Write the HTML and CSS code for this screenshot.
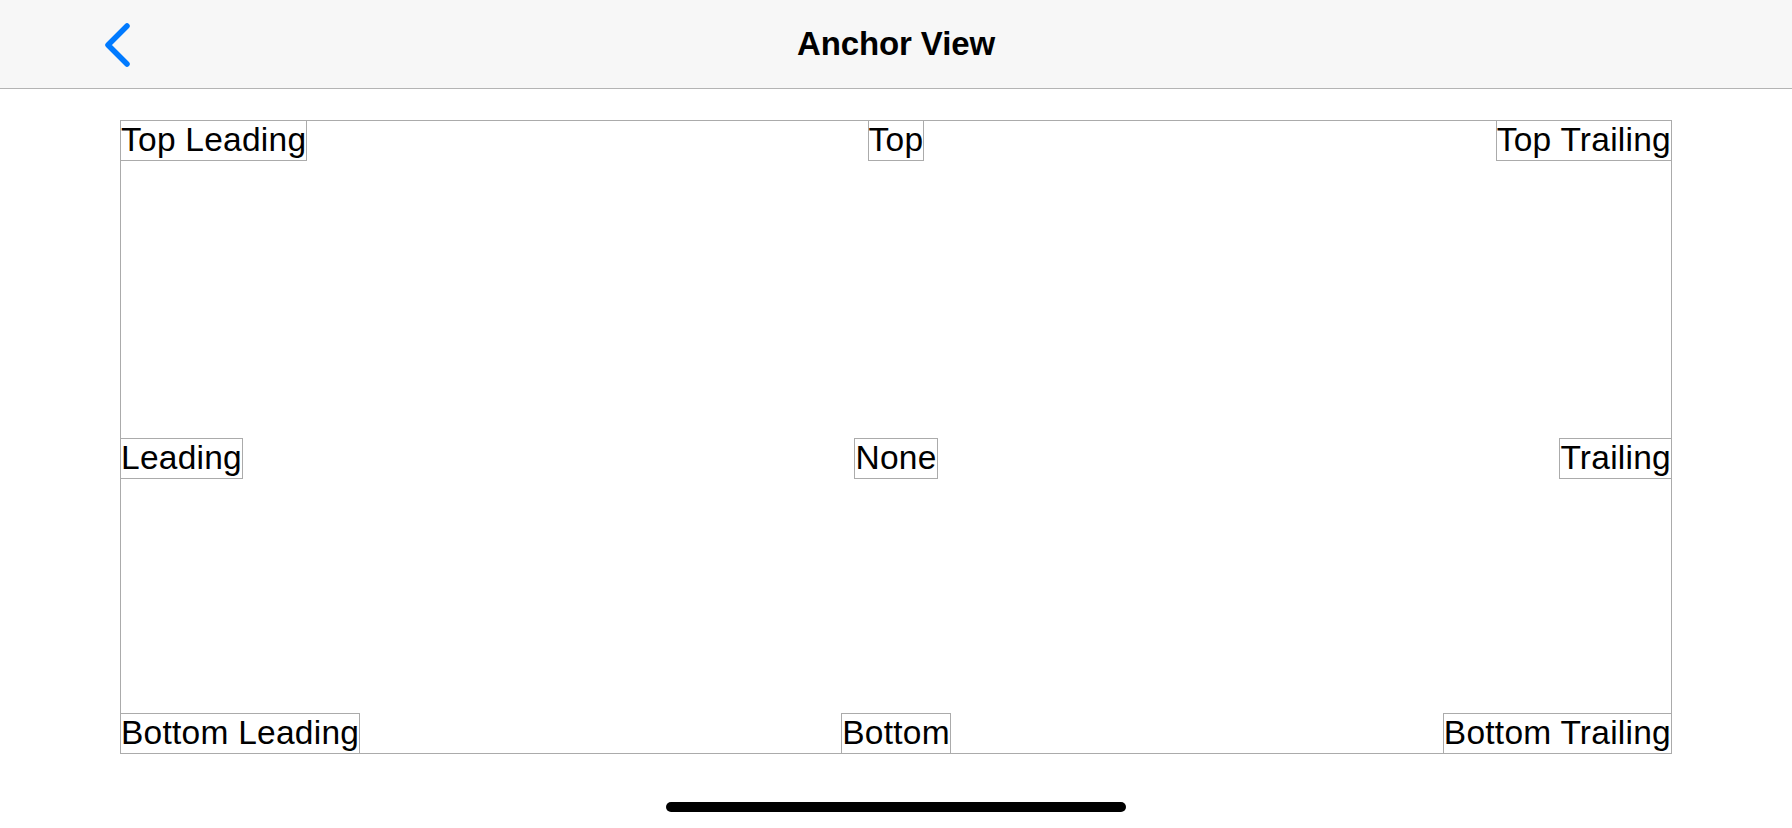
FILE: index.html
```html
<!DOCTYPE html>
<html lang="en">
<head>
<meta charset="utf-8">
<title>Anchor View</title>
<link rel="stylesheet" href="styles.css">
</head>
<body>
<div class="screen">
  <header class="navbar">
    <div class="nav-left">
      <svg class="back" width="28" height="46" viewBox="0 0 28 46" aria-hidden="true">
        <path d="M23 4 L4 23 L23 42" fill="none" stroke="#007aff" stroke-width="5.5" stroke-linecap="round" stroke-linejoin="round"/>
      </svg>
    </div>
    <div class="nav-title">Anchor View</div>
    <div class="nav-right"></div>
  </header>
  <main class="content">
    <div class="frame">
      <div class="label r1 start">Top Leading</div>
      <div class="label r1 mid">Top</div>
      <div class="label r1 end">Top Trailing</div>
      <div class="label r2 start">Leading</div>
      <div class="label r2 mid">None</div>
      <div class="label r2 end">Trailing</div>
      <div class="label r3 start">Bottom Leading</div>
      <div class="label r3 mid">Bottom</div>
      <div class="label r3 end">Bottom Trailing</div>
    </div>
  </main>
  <div class="home-bar"><span class="home-indicator"></span></div>
</div>
</body>
</html>
```
FILE: styles.css
```css
* { box-sizing: border-box; }
html, body {
  margin: 0;
  padding: 0;
  background: #ffffff;
}
body {
  font-family: "Liberation Sans", Arial, sans-serif;
  color: #000;
}
.screen {
  width: 1792px;
  height: 828px;
  display: flex;
  flex-direction: column;
  overflow: hidden;
}
.navbar {
  height: 89px;
  flex: none;
  background: #f7f7f7;
  border-bottom: 1px solid #b4b4b4;
  display: grid;
  grid-template-columns: 1fr auto 1fr;
  align-items: center;
}
.nav-left {
  display: flex;
  align-items: center;
  padding-left: 104px;
  padding-top: 1px;
}
.back { display: block; }
.nav-title {
  font-size: 33px;
  font-weight: 700;
  line-height: 40px;
  letter-spacing: -0.1px;
}
.content {
  flex: none;
  padding: 31px 0 0 120px;
}
.frame {
  width: 1552px;
  height: 634px;
  outline: 1px solid #ababab;
  outline-offset: -1px;
  display: grid;
  grid-template-columns: 1fr auto 1fr;
  grid-template-rows: 41px 277px 41px 234px 41px;
}
.label {
  border: 1px solid #ababab;
  height: 41px;
  font-size: 33.5px;
  line-height: 38px;
  letter-spacing: 0.25px;
  white-space: nowrap;
}
.r1 { grid-row: 1; }
.r2 { grid-row: 3; }
.r3 { grid-row: 5; }
.start { grid-column: 1; justify-self: start; }
.mid { grid-column: 2; justify-self: center; }
.end { grid-column: 3; justify-self: end; }
.home-bar {
  flex: none;
  display: flex;
  justify-content: center;
  padding-top: 48px;
}
.home-indicator {
  display: block;
  width: 460px;
  height: 10px;
  border-radius: 5px;
  background: #000;
}
```
